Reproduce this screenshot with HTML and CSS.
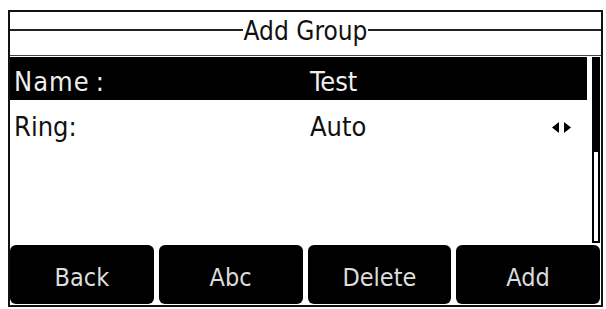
FILE: index.html
```html
<!DOCTYPE html>
<html>
<head>
<meta charset="utf-8">
<link rel="stylesheet" href="styles.css">
</head>
<body>
<div class="screen">
  <div class="title"><span class="title-text">Add Group</span></div>
  <div class="content">
    <div class="list">
      <div class="row row-selected">
        <span class="label label-name">Name<span class="colon">:</span></span>
        <span class="value">Test</span>
      </div>
      <div class="row row-ring">
        <span class="label">Ring:</span>
        <span class="value">Auto</span>
        <svg class="arrows" width="22" height="12" viewBox="0 0 22 12">
          <polygon points="8,0 8,11 1,5.5" fill="#000"/>
          <polygon points="13,0 13,11 20,5.5" fill="#000"/>
        </svg>
      </div>
    </div>
    <div class="scrollbar">
      <div class="thumb"></div>
      <div class="track"></div>
    </div>
  </div>
  <div class="softkeys">
    <div class="key">Back</div>
    <div class="key">Abc</div>
    <div class="key">Delete</div>
    <div class="key">Add</div>
  </div>
</div>
</body>
</html>
```

FILE: styles.css
```css
html, body {
  margin: 0;
  padding: 0;
  background: #fff;
}
body {
  font-family: "DejaVu Sans Condensed", "DejaVu Sans", sans-serif;
  font-stretch: condensed;
}
.screen {
  box-sizing: border-box;
  margin: 10px 0 0 8px;
  width: 595px;
  height: 297px;
  border: 2px solid #111;
  display: flex;
  flex-direction: column;
}
.title {
  height: 43px;
  border-bottom: 1px solid #444;
  display: flex;
  align-items: flex-start;
}
.title::before,
.title::after {
  content: "";
  flex: 1;
  height: 2px;
  background: #222;
  margin-top: 17px;
}
.title-text {
  font-size: 26px;
  line-height: 38px;
  color: #111;
  padding: 0 1px;
}
.content {
  margin-top: 1px;
  height: 186px;
  display: flex;
}
.list {
  width: 577px;
  display: flex;
  flex-direction: column;
}
.row {
  display: flex;
  font-size: 27px;
  line-height: 36px;
}
.row-selected {
  background: #000;
  color: #eee;
  height: 43px;
  padding-top: 7px;
  box-sizing: border-box;
}
.row-ring {
  color: #111;
  height: 45px;
  padding-top: 9px;
  box-sizing: border-box;
}
.label {
  width: 296px;
  padding-left: 4px;
}
.label-name {
  letter-spacing: 1px;
}
.colon {
  margin-left: 6px;
}
.value {
  flex: 1;
}
.arrows {
  margin: 13px 14px 0 0;
}
.scrollbar {
  margin-left: 5px;
  width: 8px;
  display: flex;
  flex-direction: column;
}
.thumb {
  height: 93px;
  background: #000;
}
.track {
  height: 93px;
  box-sizing: border-box;
  border: 2px solid #000;
  background: #fff;
}
.softkeys {
  margin-top: 2px;
  margin-right: 1px;
  height: 59px;
  display: grid;
  grid-template-columns: repeat(4, 1fr);
  column-gap: 5px;
}
.key {
  background: #000;
  border-radius: 6px;
  color: #ddd;
  font-size: 25px;
  line-height: 49px;
  padding-top: 8px;
  box-sizing: border-box;
  text-align: center;
}
```
